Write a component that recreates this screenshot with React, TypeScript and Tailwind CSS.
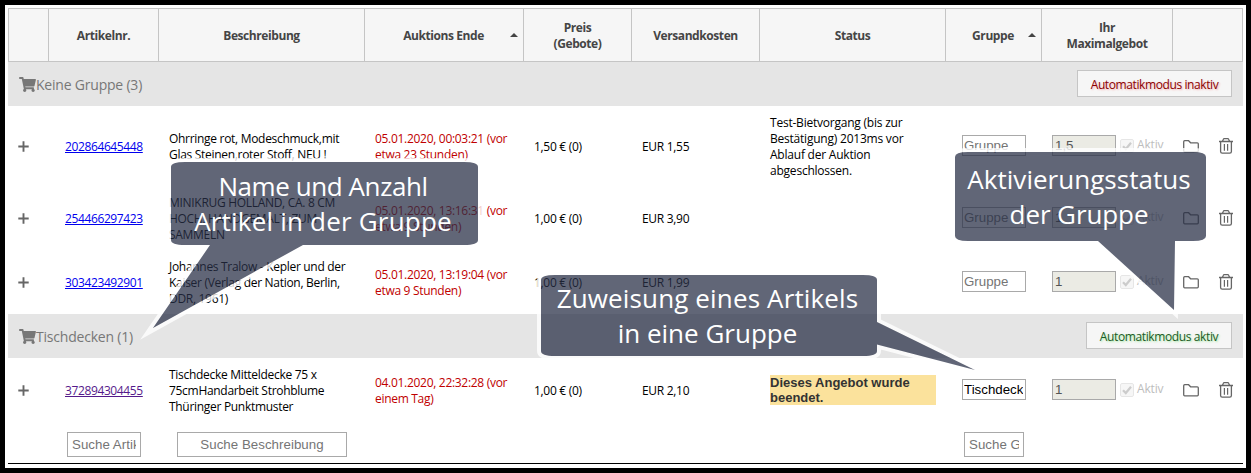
import type { ReactNode } from "react";
import { FaShoppingCart } from "react-icons/fa";

const COLS =
  "grid grid-cols-[40px_110px_206px_159px_108px_128px_186px_96px_131px_71px]";

type Item = {
  nr: string;
  visited?: boolean;
  title: string[];
  end: string[];
  price: string;
  shipping: string;
  status?: string[];
  ended?: boolean;
  group?: string;
  bid: string;
  height: string;
};

const ungrouped: Item[] = [
  {
    nr: "202864645448",
    title: ["Ohrringe rot, Modeschmuck,mit", "Glas Steinen,roter Stoff, NEU !"],
    end: ["05.01.2020, 00:03:21 (vor", "etwa 23 Stunden)"],
    price: "1,50 € (0)",
    shipping: "EUR 1,55",
    status: ["Test-Bietvorgang (bis zur", "Bestätigung) 2013ms vor", "Ablauf der Auktion", "abgeschlossen."],
    bid: "1,5",
    height: "h-[80px]",
  },
  {
    nr: "254466297423",
    title: ["MINIKRUG HOLLAND, CA. 8 CM", "HOCH, HANDGEMALT, ZUM", "SAMMELN"],
    end: ["05.01.2020, 13:16:31 (vor", "etwa 9 Stunden)"],
    price: "1,00 € (0)",
    shipping: "EUR 3,90",
    bid: "1",
    height: "h-[64px]",
  },
  {
    nr: "303423492901",
    title: ["Johannes Tralow - Kepler und der", "Kaiser (Verlag der Nation, Berlin,", "DDR, 1961)"],
    end: ["05.01.2020, 13:19:04 (vor", "etwa 9 Stunden)"],
    price: "1,00 € (0)",
    shipping: "EUR 1,99",
    bid: "1",
    height: "h-[64px]",
  },
];

const tablecloths: Item[] = [
  {
    nr: "372894304455",
    visited: true,
    title: ["Tischdecke Mitteldecke 75 x", "75cmHandarbeit Strohblume", "Thüringer Punktmuster"],
    end: ["04.01.2020, 22:32:28 (vor", "einem Tag)"],
    price: "1,00 € (0)",
    shipping: "EUR 2,10",
    status: ["Dieses Angebot wurde", "beendet."],
    ended: true,
    group: "Tischdecken",
    bid: "1",
    height: "h-[64px]",
  },
];

function HeadCell({ children, sorted, last }: { children?: ReactNode; sorted?: boolean; last?: boolean }) {
  return (
    <div
      className={
        last
          ? "border-x border-[#c5c5c5]"
          : "flex items-center justify-center border-l border-[#c5c5c5] text-center"
      }
    >
      <span className={sorted ? "flex-1 pt-[2px] pl-[12px]" : "flex-1 pt-[2px]"}>{children}</span>
      {sorted && (
        <svg className="mr-[5px] h-[4px] w-[8px]" viewBox="0 0 8 4">
          <path d="M0 4 4 0 8 4Z" fill="#444" />
        </svg>
      )}
    </div>
  );
}

function Lines({ lines }: { lines: string[] }) {
  return (
    <>
      {lines.map((l) => (
        <div key={l}>{l}</div>
      ))}
    </>
  );
}

function GroupRow({ name, active }: { name: string; active?: boolean }) {
  return (
    <div className="flex h-[44px] items-center bg-[#e5e5e5] pr-[11px] pl-[11px] text-[#777]">
      <FaShoppingCart className="h-[15px] w-[17px]" />
      <span className="text-[14px] tracking-[-0.21px]">{name}</span>
      <div
        className={
          active
            ? "ml-auto flex h-[27px] w-[146px] -mt-px items-center justify-center border border-[#c5c5c5] bg-[#f6f6f6] pt-[3px] text-[12px] tracking-[-0.38px] text-[#1d5b25] [text-shadow:1px_1px_2px_#a5eba5]"
            : "ml-auto flex h-[27px] w-[155px] -mt-px items-center justify-center border border-[#c5c5c5] bg-[#f6f6f6] pt-[3px] text-[12px] tracking-[-0.4px] text-[#8b0000] [text-shadow:1px_1px_2px_#f5b0b0]"
        }
      >
        {active ? "Automatikmodus aktiv" : "Automatikmodus inaktiv"}
      </div>
    </div>
  );
}

function ItemRow({ item }: { item: Item }) {
  return (
    <div className={`${COLS} ${item.height} items-center leading-[16px] whitespace-nowrap`}>
      <svg className="ml-[10px] h-[11px] w-[11px]" viewBox="0 0 11 11">
        <path d="M5.5 0.3V10.7M0.3 5.5H10.7" stroke="#666" strokeWidth="1.9" />
      </svg>
      <a
        className={
          item.visited
            ? "pt-[2px] pl-[17px] tracking-[-0.38px] text-[#551a8b] underline"
            : "pt-[2px] pl-[17px] tracking-[-0.38px] text-[#0000ee] underline"
        }
      >
        {item.nr}
      </a>
      <div className="pt-[2px] pl-[11px]">
        <Lines lines={item.title} />
      </div>
      <div className="pt-[2px] pl-[11px] text-[#c00000]">
        <Lines lines={item.end} />
      </div>
      <div className="pt-[2px] pl-[11px]">{item.price}</div>
      <div className="pt-[2px] pl-[11px]">{item.shipping}</div>
      <div className="pr-[9px] pl-[11px]">
        {item.status &&
          (item.ended ? (
            <div className="h-[30px] bg-[#fbe29c] font-['Liberation_Sans',sans-serif] text-[13px] leading-[15px] font-bold tracking-[0px] text-[#333]">
              <Lines lines={item.status} />
            </div>
          ) : (
            <div className="pt-[2px] tracking-[-0.22px]">
              <Lines lines={item.status} />
            </div>
          ))}
      </div>
      <div className="pl-[17px]">
        <input
          className="-mt-px block h-[21px] w-[64px] border border-[#a9a9a9] bg-white pr-[2px] pl-[1px] font-['Liberation_Sans',sans-serif] text-[13.3px] tracking-[0px] text-black placeholder:text-[#757575]"
          placeholder="Gruppe"
          defaultValue={item.group}
        />
      </div>
      <div className="flex items-center pl-[11px]">
        <input
          className="-mt-[2px] block h-[21px] w-[64px] border border-[#a9a9a9] bg-[#ebebe4] pl-[2px] font-['Liberation_Sans',sans-serif] text-[13.3px] tracking-[0px] text-[#545454]"
          defaultValue={item.bid}
          disabled
        />
        <svg className="-mt-px ml-[4px] h-[14px] w-[14px]" viewBox="0 0 14 14">
          <rect x="0.5" y="0.5" width="13" height="13" rx="1.5" fill="#f6f6f6" stroke="#e6e6e6" />
          <path d="M3 7.2 5.8 10 11 3.8" fill="none" stroke="#cccccc" strokeWidth="2.2" />
        </svg>
        <span className="-mt-[2px] ml-[3px] tracking-[-0.15px] text-[#bdbdbd]">Aktiv</span>
      </div>
      <div className="flex items-center pl-[11px]">
        <svg className="h-[13px] w-[16px]" viewBox="0 0 16 13" fill="none" stroke="#666" strokeWidth="1.3">
          <path d="M.7 1.7Q.7.7 1.7.7H5.6L7.6 2.8H14.3Q15.3 2.8 15.3 3.8V10.8Q15.3 11.8 14.3 11.8H1.7Q.7 11.8.7 10.8Z" />
        </svg>
        <svg className="ml-[20px] h-[16px] w-[14px]" viewBox="0 0 14 16" fill="none" stroke="#666" strokeWidth="1.3">
          <path d="M0 3.5H14M3.4 3.3 4.4 1.2Q4.6.7 5.2.7H8.8Q9.4.7 9.6 1.2L10.6 3.3" />
          <path d="M1.6 3.5V13.6Q1.6 15.2 3.2 15.2H10.8Q12.4 15.2 12.4 13.6V3.5" />
          <path d="M5.4 6V12.8M8.6 6V12.8" strokeWidth="1.2" />
        </svg>
      </div>
    </div>
  );
}

const filterInput =
  "block h-[25px] border border-[#a9a9a9] bg-white font-['Liberation_Sans',sans-serif] text-[13.3px] tracking-[0.03px] placeholder:text-[#757575]";

const bubbles = [
  "M171 167Q171 162 185 162H464Q478 162 478 167V240Q478 245 464 245H303L153 328 210 245H185Q171 245 171 240Z",
  "M541 280Q541 275 555 275H863Q877 275 877 280V322L975 370 877 344.5V351Q877 356 863 356H555Q541 356 541 351Z",
  "M955 157Q955 152 968 152H1193Q1206 152 1206 157V236Q1206 241 1193 241H1175L1174 310 1098 241H968Q955 241 955 236Z",
];

function Callouts() {
  const text =
    "absolute flex flex-col items-center justify-center pr-[3px] text-[26px] leading-[35px] whitespace-nowrap text-white font-['Open_Sans',sans-serif]";
  return (
    <div className="pointer-events-none absolute -top-[5px] -left-[5px] h-[473px] w-[1251px]">
      <svg className="absolute inset-0" width="1251" height="473" viewBox="0 0 1251 473">
        {bubbles.map((d, i) => (
          <g key={d}>
            <mask id={`outside${i}`} maskUnits="userSpaceOnUse" x="0" y="0" width="1251" height="473">
              <rect width="1251" height="473" fill="white" />
              <path d={d} fill="black" />
            </mask>
            <path
              d={d}
              fill="none"
              stroke="white"
              strokeOpacity="0.8"
              strokeWidth="8"
              strokeMiterlimit="8"
              mask={`url(#outside${i})`}
            />
            <path d={d} fill="#282f46" fillOpacity="0.735" />
          </g>
        ))}
      </svg>
      <div className={`${text} top-[162px] left-[171px] h-[83px] w-[307px]`}>
        <div className="tracking-[-0.42px]">Name und Anzahl</div>
        <div className="tracking-[0.2px]">Artikel in der Gruppe</div>
      </div>
      <div className={`${text} top-[275px] left-[541px] h-[81px] w-[336px]`}>
        <div className="tracking-[0.14px]">Zuweisung eines Artikels</div>
        <div className="tracking-[0px]">in eine Gruppe</div>
      </div>
      <div className={`${text} top-[152px] left-[955px] h-[89px] w-[251px]`}>
        <div className="tracking-[0.03px]">Aktivierungsstatus</div>
        <div className="tracking-[-0.1px]">der Gruppe</div>
      </div>
    </div>
  );
}

export default function App() {
  return (
    <div className="relative h-[473px] w-[1251px] overflow-hidden border-[5px] border-black bg-white pt-[3px] pl-[3px] font-['Open_Sans',sans-serif] text-[12px] tracking-[-0.3px] text-black">
      <div className="h-[456px] w-[1235px] border-b border-black">
        <div
          className={`${COLS} h-[54px] border-y border-[#c5c5c5] bg-[#f6f6f6] leading-[16px] font-bold tracking-[-0.42px] text-[#454545]`}
        >
          <HeadCell />
          <HeadCell>Artikelnr.</HeadCell>
          <HeadCell>Beschreibung</HeadCell>
          <HeadCell sorted>Auktions Ende</HeadCell>
          <HeadCell>
            Preis
            <br />
            (Gebote)
          </HeadCell>
          <HeadCell>Versandkosten</HeadCell>
          <HeadCell>Status</HeadCell>
          <HeadCell sorted>Gruppe</HeadCell>
          <HeadCell>
            Ihr
            <br />
            Maximalgebot
          </HeadCell>
          <HeadCell last />
        </div>
        <GroupRow name="Keine Gruppe (3)" />
        {ungrouped.map((i) => (
          <ItemRow key={i.nr} item={i} />
        ))}
        <GroupRow name="Tischdecken (1)" active />
        {tablecloths.map((i) => (
          <ItemRow key={i.nr} item={i} />
        ))}
        <div className={`${COLS} pt-[10px]`}>
          <div />
          <div className="pl-[19px]">
            <input className={`${filterInput} w-[74px] px-[4px]`} placeholder="Suche Artikelnr." />
          </div>
          <div className="pl-[19px]">
            <input className={`${filterInput} w-[170px] text-center`} placeholder="Suche Beschreibung" />
          </div>
          <div />
          <div />
          <div />
          <div />
          <div className="pl-[19px]">
            <input className={`${filterInput} w-[60px] px-[4px]`} placeholder="Suche Gruppe" />
          </div>
          <div />
          <div />
        </div>
      </div>
      <Callouts />
    </div>
  );
}
